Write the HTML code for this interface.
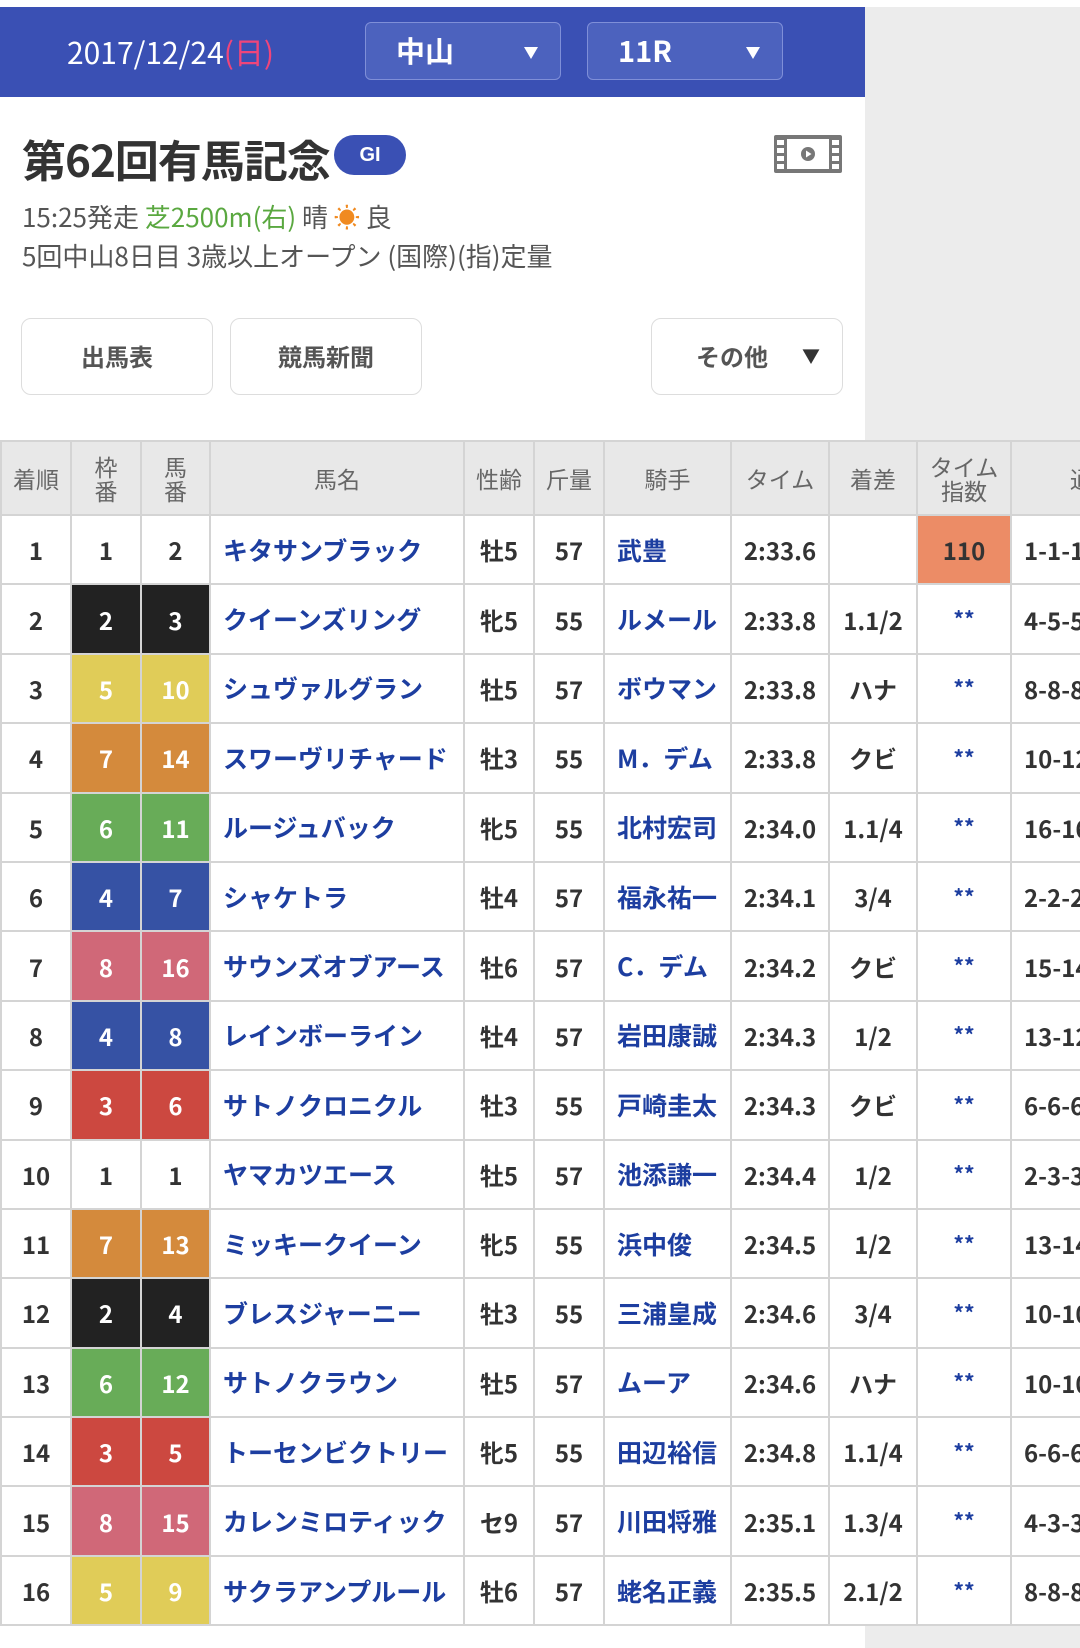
<!DOCTYPE html>
<html><head><meta charset="utf-8"><style>
*{margin:0;padding:0;box-sizing:border-box}
body{width:1080px;height:1648px;background:#fff;position:relative;overflow:hidden;font-family:"Liberation Sans","Noto Sans CJK JP",sans-serif}
.gray{position:absolute;background:#ececec}
.hdr{position:absolute;left:0;top:7px;width:865px;height:90px;background:#3a50b4}
.date{position:absolute;left:67px;top:29px;color:#fff;font-size:30px;font-family:"Noto Sans CJK JP",sans-serif}
.date span{color:#f0457a}
.sel{position:absolute;top:22px;height:58px;width:196px;border:1.5px solid #7f8fd8;border-radius:6px;background:#4c62be;color:#fff;font-size:29px;font-weight:bold;padding-left:30px;line-height:54px;font-family:"Noto Sans CJK JP",sans-serif}
.sel:after{content:"";position:absolute;right:22px;top:24px;border-left:7px solid transparent;border-right:7px solid transparent;border-top:12px solid #fff}
.title{position:absolute;left:22px;top:126px;font-size:44px;font-weight:bold;color:#333;font-family:"Noto Sans CJK JP",sans-serif;letter-spacing:-1px}
.gi{position:absolute;left:334px;top:135px;width:72px;height:40px;border-radius:20px;background:#3a50b4;color:#fff;font-size:20px;font-weight:bold;text-align:center;line-height:40px}
.l2{position:absolute;left:22px;top:198px;font-size:26px;color:#555;font-family:"Noto Sans CJK JP",sans-serif}
.l3{position:absolute;left:22px;top:237px;font-size:26px;color:#555;font-family:"Noto Sans CJK JP",sans-serif}
.btn{position:absolute;top:318px;height:77px;width:192px;border:1.5px solid #ddd;border-radius:10px;background:#fff;text-align:center;line-height:74px;font-size:24px;font-weight:bold;color:#555;font-family:"Noto Sans CJK JP",sans-serif}
table{position:absolute;left:0;top:440px;border-collapse:collapse;table-layout:fixed;width:1100px}
td,th{border:2px solid #d4d4d4;text-align:center;font-family:"Noto Sans CJK JP",sans-serif;overflow:hidden;white-space:nowrap}
th{background:#e8e8e8;color:#666;font-weight:normal;font-size:23px;height:74px;line-height:24px}
td{height:69.4px;font-size:24px;font-weight:bold;color:#333}
td.n{color:#1d3ea0;text-align:left;padding-left:12px;font-size:25px}
td.j{color:#1d3ea0;text-align:left;padding-left:12px;font-size:25px}
td.s{color:#1d3ea0;font-size:21px}
td.w{color:#fff}
td.l{text-align:left;padding-left:12px}
</style></head><body>
<div class="gray" style="left:865px;top:7px;width:215px;height:433px"></div>
<div class="gray" style="left:865px;top:1625px;width:215px;height:23px"></div>
<div class="hdr"></div>
<div class="date">2017/12/24<span>(日)</span></div>
<div class="sel" style="left:365px">中山</div>
<div class="sel" style="left:587px">11R</div>
<div class="title">第62回有馬記念</div>
<div class="gi">GI</div>
<svg style="position:absolute;left:773px;top:134px" width="70" height="40" viewBox="0 0 70 40"><rect x="1" y="1" width="68" height="38" rx="2" fill="#777"/><rect x="14" y="5" width="42" height="30" fill="#fff"/><g fill="#fff"><rect x="4" y="6" width="7" height="5"/><rect x="4" y="14" width="7" height="5"/><rect x="4" y="22" width="7" height="5"/><rect x="4" y="30" width="7" height="5"/><rect x="59" y="6" width="7" height="5"/><rect x="59" y="14" width="7" height="5"/><rect x="59" y="22" width="7" height="5"/><rect x="59" y="30" width="7" height="5"/></g><circle cx="35" cy="20" r="7" fill="#777"/><path d="M33 16.5L38.5 20L33 23.5Z" fill="#fff"/></svg>
<div class="l2">15:25発走 <span style="color:#5aa840">芝2500m(右)</span> 晴 <span style="color:#f08a20">☀</span> 良</div>
<div class="l3">5回中山8日目 3歳以上オープン (国際)(指)定量</div>
<div class="btn" style="left:21px">出馬表</div>
<div class="btn" style="left:230px">競馬新聞</div>
<div class="btn" style="left:651px;padding-right:30px">その他<span style="position:absolute;right:22px;top:0;font-size:18px;color:#333">▼</span></div>
<table>
<colgroup><col style="width:70px"><col style="width:70px"><col style="width:69px"><col style="width:254px"><col style="width:70px"><col style="width:70px"><col style="width:127px"><col style="width:98px"><col style="width:88px"><col style="width:94px"><col style="width:90px"></colgroup>
<tr><th>着順</th><th>枠<br>番</th><th>馬<br>番</th><th>馬名</th><th>性齢</th><th>斤量</th><th>騎手</th><th>タイム</th><th>着差</th><th>タイム<br>指数</th><th style="text-align:left;padding-left:58px">通</th></tr>
<tr><td>1</td><td>1</td><td>2</td><td class="n">キタサンブラック</td><td>牡5</td><td>57</td><td class="j">武豊</td><td>2:33.6</td><td></td><td style="background:#ec8c66">110</td><td class="l">1-1-1</td></tr>
<tr><td>2</td><td class="w" style="background:#222">2</td><td class="w" style="background:#222">3</td><td class="n">クイーンズリング</td><td>牝5</td><td>55</td><td class="j">ルメール</td><td>2:33.8</td><td>1.1/2</td><td class="s">**</td><td class="l">4-5-5</td></tr>
<tr><td>3</td><td class="w" style="background:#e0cc58">5</td><td class="w" style="background:#e0cc58">10</td><td class="n">シュヴァルグラン</td><td>牡5</td><td>57</td><td class="j">ボウマン</td><td>2:33.8</td><td>ハナ</td><td class="s">**</td><td class="l">8-8-8</td></tr>
<tr><td>4</td><td class="w" style="background:#d48a3c">7</td><td class="w" style="background:#d48a3c">14</td><td class="n">スワーヴリチャード</td><td>牡3</td><td>55</td><td class="j">M．デム</td><td>2:33.8</td><td>クビ</td><td class="s">**</td><td class="l">10-12</td></tr>
<tr><td>5</td><td class="w" style="background:#68ac58">6</td><td class="w" style="background:#68ac58">11</td><td class="n">ルージュバック</td><td>牝5</td><td>55</td><td class="j">北村宏司</td><td>2:34.0</td><td>1.1/4</td><td class="s">**</td><td class="l">16-16</td></tr>
<tr><td>6</td><td class="w" style="background:#3652a4">4</td><td class="w" style="background:#3652a4">7</td><td class="n">シャケトラ</td><td>牡4</td><td>57</td><td class="j">福永祐一</td><td>2:34.1</td><td>3/4</td><td class="s">**</td><td class="l">2-2-2</td></tr>
<tr><td>7</td><td class="w" style="background:#d06878">8</td><td class="w" style="background:#d06878">16</td><td class="n">サウンズオブアース</td><td>牡6</td><td>57</td><td class="j">C．デム</td><td>2:34.2</td><td>クビ</td><td class="s">**</td><td class="l">15-14</td></tr>
<tr><td>8</td><td class="w" style="background:#3652a4">4</td><td class="w" style="background:#3652a4">8</td><td class="n">レインボーライン</td><td>牡4</td><td>57</td><td class="j">岩田康誠</td><td>2:34.3</td><td>1/2</td><td class="s">**</td><td class="l">13-12</td></tr>
<tr><td>9</td><td class="w" style="background:#cc4840">3</td><td class="w" style="background:#cc4840">6</td><td class="n">サトノクロニクル</td><td>牡3</td><td>55</td><td class="j">戸崎圭太</td><td>2:34.3</td><td>クビ</td><td class="s">**</td><td class="l">6-6-6</td></tr>
<tr><td>10</td><td>1</td><td>1</td><td class="n">ヤマカツエース</td><td>牡5</td><td>57</td><td class="j">池添謙一</td><td>2:34.4</td><td>1/2</td><td class="s">**</td><td class="l">2-3-3</td></tr>
<tr><td>11</td><td class="w" style="background:#d48a3c">7</td><td class="w" style="background:#d48a3c">13</td><td class="n">ミッキークイーン</td><td>牝5</td><td>55</td><td class="j">浜中俊</td><td>2:34.5</td><td>1/2</td><td class="s">**</td><td class="l">13-14</td></tr>
<tr><td>12</td><td class="w" style="background:#222">2</td><td class="w" style="background:#222">4</td><td class="n">ブレスジャーニー</td><td>牡3</td><td>55</td><td class="j">三浦皇成</td><td>2:34.6</td><td>3/4</td><td class="s">**</td><td class="l">10-10</td></tr>
<tr><td>13</td><td class="w" style="background:#68ac58">6</td><td class="w" style="background:#68ac58">12</td><td class="n">サトノクラウン</td><td>牡5</td><td>57</td><td class="j">ムーア</td><td>2:34.6</td><td>ハナ</td><td class="s">**</td><td class="l">10-10</td></tr>
<tr><td>14</td><td class="w" style="background:#cc4840">3</td><td class="w" style="background:#cc4840">5</td><td class="n">トーセンビクトリー</td><td>牝5</td><td>55</td><td class="j">田辺裕信</td><td>2:34.8</td><td>1.1/4</td><td class="s">**</td><td class="l">6-6-6</td></tr>
<tr><td>15</td><td class="w" style="background:#d06878">8</td><td class="w" style="background:#d06878">15</td><td class="n">カレンミロティック</td><td>セ9</td><td>57</td><td class="j">川田将雅</td><td>2:35.1</td><td>1.3/4</td><td class="s">**</td><td class="l">4-3-3</td></tr>
<tr><td>16</td><td class="w" style="background:#e0cc58">5</td><td class="w" style="background:#e0cc58">9</td><td class="n">サクラアンプルール</td><td>牡6</td><td>57</td><td class="j">蛯名正義</td><td>2:35.5</td><td>2.1/2</td><td class="s">**</td><td class="l">8-8-8</td></tr>
</table>
</body></html>
